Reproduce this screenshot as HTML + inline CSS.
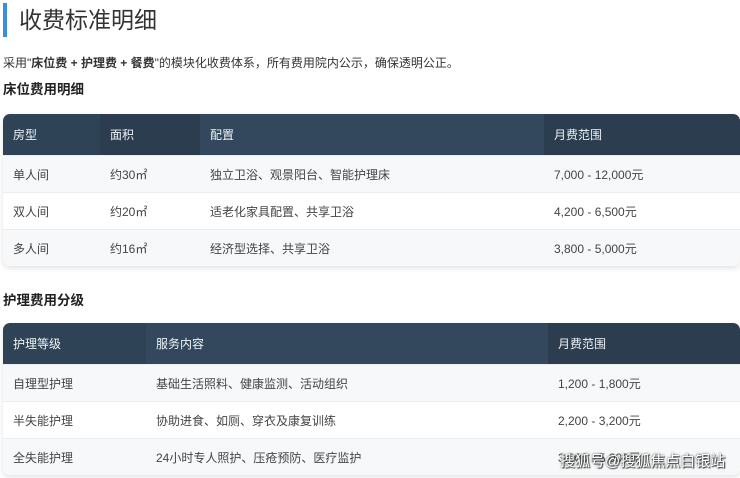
<!DOCTYPE html>
<html><head><meta charset="utf-8"><style>
*{margin:0;padding:0;box-sizing:border-box}
body{width:740px;height:478px;overflow:hidden;background:#fff;font-family:"Liberation Sans","Noto Sans CJK SC",sans-serif;color:#333;position:relative}
.title{position:absolute;left:3px;top:3px;height:34px;border-left:4px solid #3a8fd6;padding-left:12px;font-size:23px;line-height:34px;color:#333}
.p{position:absolute;left:3px;top:55px;font-size:12px;line-height:16px;color:#333}
.h{position:absolute;left:3px;font-size:13.5px;font-weight:bold;color:#222}
table{position:absolute;left:3px;width:737px;border-collapse:separate;border-spacing:0;border-radius:7px;overflow:hidden;box-shadow:0 2px 6px rgba(0,0,0,.12);font-size:12px}
th{background:#2f4357;color:#eef2f5;font-weight:normal;text-align:left;height:41px;padding-left:10px}
th:nth-child(2n){background:#2b3d4f}
th:nth-child(3){background:#33485d}
td{height:37px;padding-left:10px;color:#444;border-top:1px solid #e9edf0}
tr:nth-child(odd) td{background:#f6f8f9}
tr:nth-child(even) td{background:#fff}
.wm{position:absolute;left:560px;top:450px;font-size:15px;color:#fff;text-shadow:0 0 2px #333,1px 1px 1px #333;letter-spacing:0}
</style></head><body>
<div class="title">收费标准明细</div>
<div class="p">采用"<b>床位费 + 护理费 + 餐费</b>"的模块化收费体系，所有费用院内公示，确保透明公正。</div>
<div class="h" style="top:78px">床位费用明细</div>
<table style="top:114px">
<thead><tr><th style="width:97px">房型</th><th style="width:100px">面积</th><th style="width:344px">配置</th><th>月费范围</th></tr></thead>
<tbody>
<tr><td>单人间</td><td>约30㎡</td><td>独立卫浴、观景阳台、智能护理床</td><td>7,000 - 12,000元</td></tr>
<tr><td>双人间</td><td>约20㎡</td><td>适老化家具配置、共享卫浴</td><td>4,200 - 6,500元</td></tr>
<tr><td>多人间</td><td>约16㎡</td><td>经济型选择、共享卫浴</td><td>3,800 - 5,000元</td></tr>
</tbody></table>
<div class="h" style="top:289px">护理费用分级</div>
<table style="top:323px">
<thead><tr><th style="width:143px">护理等级</th><th style="width:402px;background:#33485d">服务内容</th><th style="background:#2b3d4f">月费范围</th></tr></thead>
<tbody>
<tr><td>自理型护理</td><td>基础生活照料、健康监测、活动组织</td><td>1,200 - 1,800元</td></tr>
<tr><td>半失能护理</td><td>协助进食、如厕、穿衣及康复训练</td><td>2,200 - 3,200元</td></tr>
<tr><td>全失能护理</td><td>24小时专人照护、压疮预防、医疗监护</td><td>3,000 - 5,000元</td></tr>
</tbody></table>
<div class="wm">搜狐号@搜狐焦点白银站</div>
</body></html>
